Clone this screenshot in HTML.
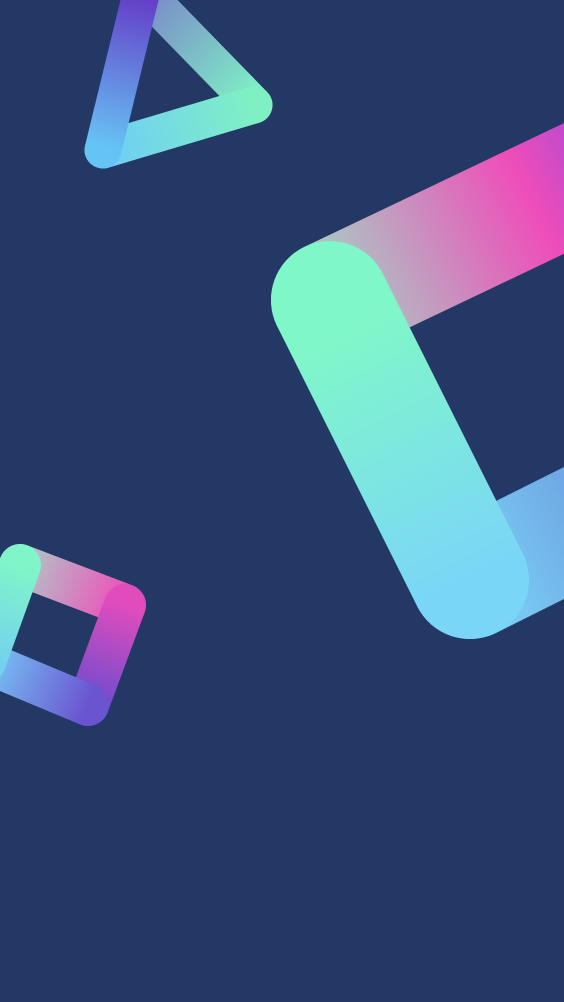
<!DOCTYPE html>
<html><head><meta charset="utf-8"><style>
html,body{margin:0;padding:0;width:564px;height:1002px;overflow:hidden;background:#233865;}
svg{display:block}
</style></head><body>
<svg width="564" height="1002" viewBox="0 0 564 1002" xmlns="http://www.w3.org/2000/svg">
<defs>
<linearGradient id="bt" gradientUnits="userSpaceOnUse" x1="330" y1="300" x2="600" y2="170"><stop offset="0" stop-color="#a6d0c4"/><stop offset="0.75" stop-color="#ef4db9"/><stop offset="1" stop-color="#b84ad0"/></linearGradient>
<linearGradient id="bl" gradientUnits="userSpaceOnUse" x1="330" y1="300" x2="470" y2="580"><stop offset="0.1" stop-color="#80f7c8"/><stop offset="1" stop-color="#7ad6f7"/></linearGradient>
<linearGradient id="bb" gradientUnits="userSpaceOnUse" x1="470" y1="580" x2="620" y2="505"><stop offset="0" stop-color="#7bd2f6"/><stop offset="1" stop-color="#6c9be0"/></linearGradient>
<linearGradient id="tl" gradientUnits="userSpaceOnUse" x1="142" y1="0" x2="104" y2="148"><stop offset="0" stop-color="#6440c8"/><stop offset="1" stop-color="#66c4f5"/></linearGradient>
<linearGradient id="tr" gradientUnits="userSpaceOnUse" x1="142" y1="0" x2="252" y2="104"><stop offset="0" stop-color="#7a88c8"/><stop offset="1" stop-color="#7ff2c6"/></linearGradient>
<linearGradient id="tb" gradientUnits="userSpaceOnUse" x1="104" y1="148" x2="252" y2="104"><stop offset="0" stop-color="#6fcdf6"/><stop offset="1" stop-color="#7ff0c4"/></linearGradient>
<linearGradient id="st" gradientUnits="userSpaceOnUse" x1="20" y1="565" x2="125" y2="605"><stop offset="0" stop-color="#b0c8c8"/><stop offset="1" stop-color="#f04cb8"/></linearGradient>
<linearGradient id="sr" gradientUnits="userSpaceOnUse" x1="125" y1="605" x2="88" y2="705"><stop offset="0" stop-color="#e04cbc"/><stop offset="1" stop-color="#6a4cd0"/></linearGradient>
<linearGradient id="sb" gradientUnits="userSpaceOnUse" x1="-15" y1="662" x2="88" y2="705"><stop offset="0" stop-color="#78c8f6"/><stop offset="1" stop-color="#6a54d0"/></linearGradient>
<linearGradient id="sl" gradientUnits="userSpaceOnUse" x1="20" y1="565" x2="-15" y2="662"><stop offset="0" stop-color="#80f5c8"/><stop offset="1" stop-color="#74d0f0"/></linearGradient>
</defs>
<g fill="none" stroke-linecap="round">
<line x1="330" y1="300" x2="760" y2="95" stroke="url(#bt)" stroke-width="118"/>
<line x1="470" y1="580" x2="760" y2="435" stroke="url(#bb)" stroke-width="118"/>
<line x1="330" y1="300" x2="470" y2="580" stroke="url(#bl)" stroke-width="118"/>

<line x1="142" y1="-10" x2="254" y2="105" stroke="url(#tr)" stroke-width="37"/>
<line x1="103" y1="150" x2="254" y2="105" stroke="url(#tb)" stroke-width="37"/>
<line x1="142" y1="-10" x2="103" y2="150" stroke="url(#tl)" stroke-width="37"/>

<line x1="20" y1="565" x2="125" y2="605" stroke="url(#st)" stroke-width="42"/>
<line x1="125" y1="605" x2="88" y2="705" stroke="url(#sr)" stroke-width="42"/>
<line x1="-15" y1="662" x2="88" y2="705" stroke="url(#sb)" stroke-width="42"/>
<line x1="20" y1="565" x2="-15" y2="662" stroke="url(#sl)" stroke-width="42"/>
</g>
</svg>
</body></html>
